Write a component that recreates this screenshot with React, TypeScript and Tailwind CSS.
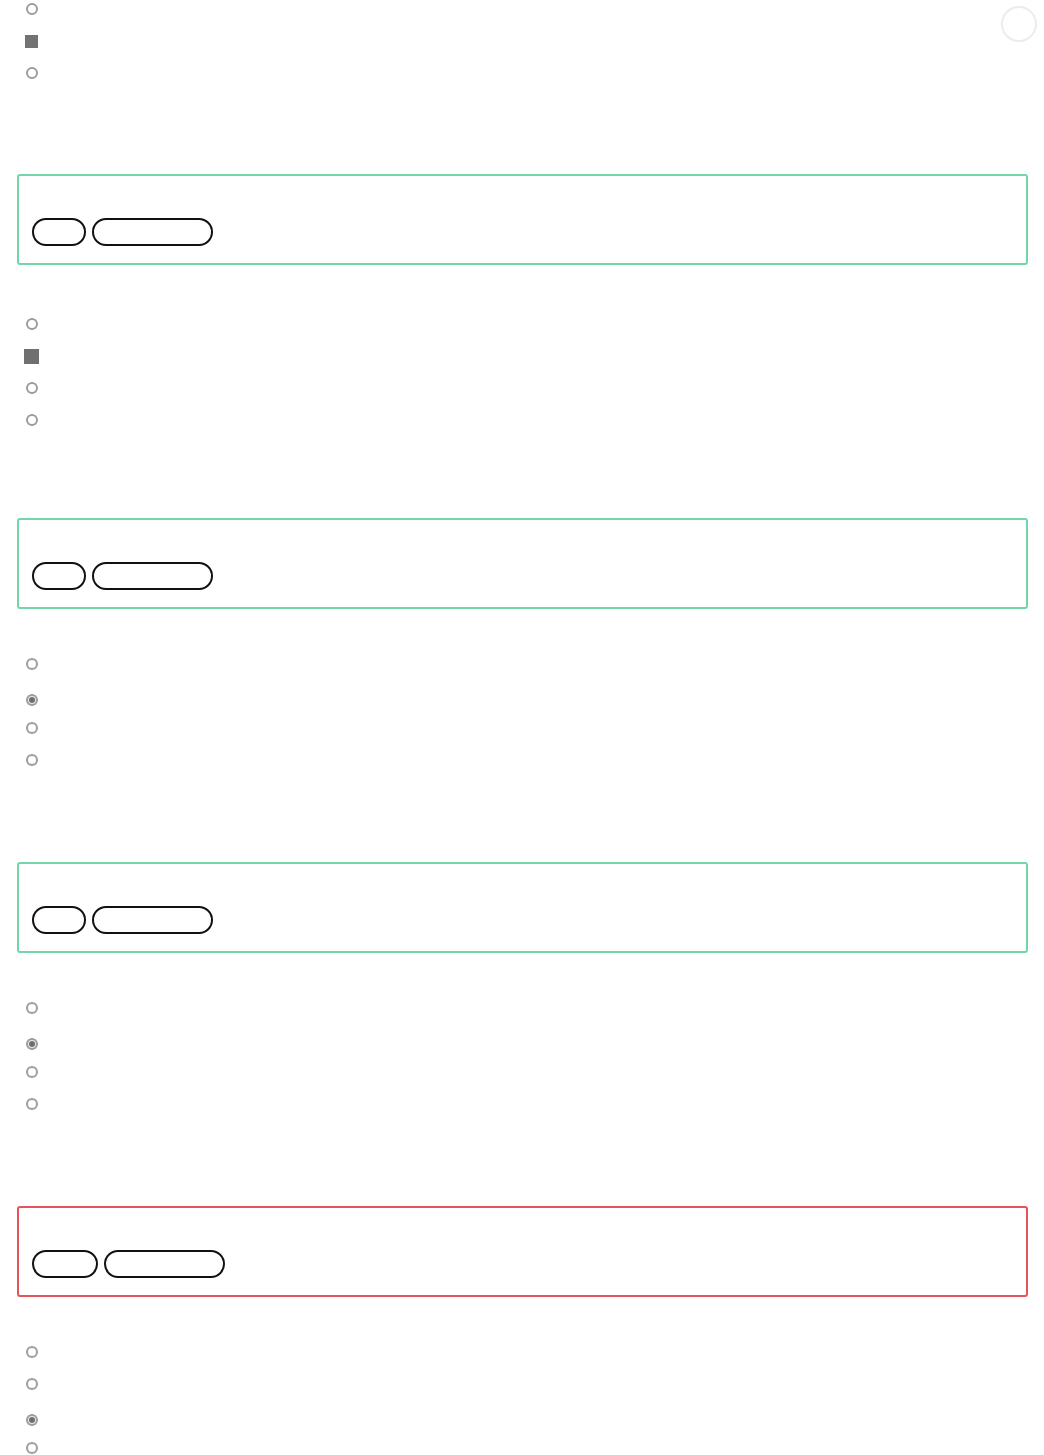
import React from "react";

type Mark = "circle" | "square" | "squareLg" | "checked";

type Question = {
  marks: Mark[];
  listTop: string;
  boxTop: string;
  status: "correct" | "wrong";
  pills: string[];
};

const questions: Question[] = [
  {
    marks: ["circle", "square", "circle"],
    listTop: "mt-0",
    boxTop: "mt-[78px]",
    status: "correct",
    pills: ["w-[54px]", "w-[121px]"],
  },
  {
    marks: ["circle", "squareLg", "circle", "circle"],
    listTop: "mt-[50px]",
    boxTop: "mt-[75px]",
    status: "correct",
    pills: ["w-[54px]", "w-[121px]"],
  },
  {
    marks: ["circle", "checked", "circle", "circle"],
    listTop: "mt-[46px]",
    boxTop: "mt-[79px]",
    status: "correct",
    pills: ["w-[54px]", "w-[121px]"],
  },
  {
    marks: ["circle", "checked", "circle", "circle"],
    listTop: "mt-[46px]",
    boxTop: "mt-[79px]",
    status: "wrong",
    pills: ["w-[66px]", "w-[121px]"],
  },
];

const lastList: Mark[] = ["circle", "circle", "checked", "circle"];

function Marker({ kind }: { kind: Mark }) {
  if (kind === "square") {
    return <span className="mt-[3px] block w-[13px] h-[13px] bg-[#737373]" />;
  }
  if (kind === "squareLg") {
    return <span className="mt-[2px] block w-[15px] h-[15px] bg-[#707070]" />;
  }
  if (kind === "checked") {
    return (
      <span className="mt-[7px] flex w-3 h-3 items-center justify-center rounded-full border-2 border-[#9c9c9c] bg-[#ececec]">
        <span className="block w-[6px] h-[6px] rounded-full bg-[#6f6f6f]" />
      </span>
    );
  }
  return (
    <span className="mt-[3px] block w-3 h-3 rounded-full border-2 border-[#9c9c9c]" />
  );
}

function OptionList({ marks, className }: { marks: Mark[]; className: string }) {
  return (
    <ul className={`${className} flex flex-col`}>
      {marks.map((m, i) => (
        <li key={i} className="h-8 flex items-start pl-6">
          <span className="w-[15px] flex justify-center">
            <Marker kind={m} />
          </span>
        </li>
      ))}
    </ul>
  );
}

function Feedback({ q }: { q: Question }) {
  const border = q.status === "correct" ? "border-[#6fd7a9]" : "border-[#e4545b]";
  return (
    <div
      className={`${q.boxTop} ml-[17px] mr-4 rounded-[3px] border-2 ${border} pt-[42px] pb-[17px] pl-[13px]`}
    >
      <div className="flex gap-1.5">
        {q.pills.map((w, i) => (
          <button
            key={i}
            type="button"
            className={`${w} h-7 rounded-full border-2 border-[#111111] bg-white`}
          />
        ))}
      </div>
    </div>
  );
}

export default function App() {
  return (
    <div className="relative min-h-screen bg-white font-['Liberation_Sans',sans-serif]">
      {/* floating round button, top right */}
      <button
        type="button"
        className="absolute top-[6px] right-[7px] w-9 h-9 rounded-full border-2 border-[#ececec] bg-white"
      />

      {questions.map((q, i) => (
        <section key={i}>
          <OptionList marks={q.marks} className={q.listTop} />
          <Feedback q={q} />
        </section>
      ))}

      <OptionList marks={lastList} className="mt-[46px]" />
    </div>
  );
}
